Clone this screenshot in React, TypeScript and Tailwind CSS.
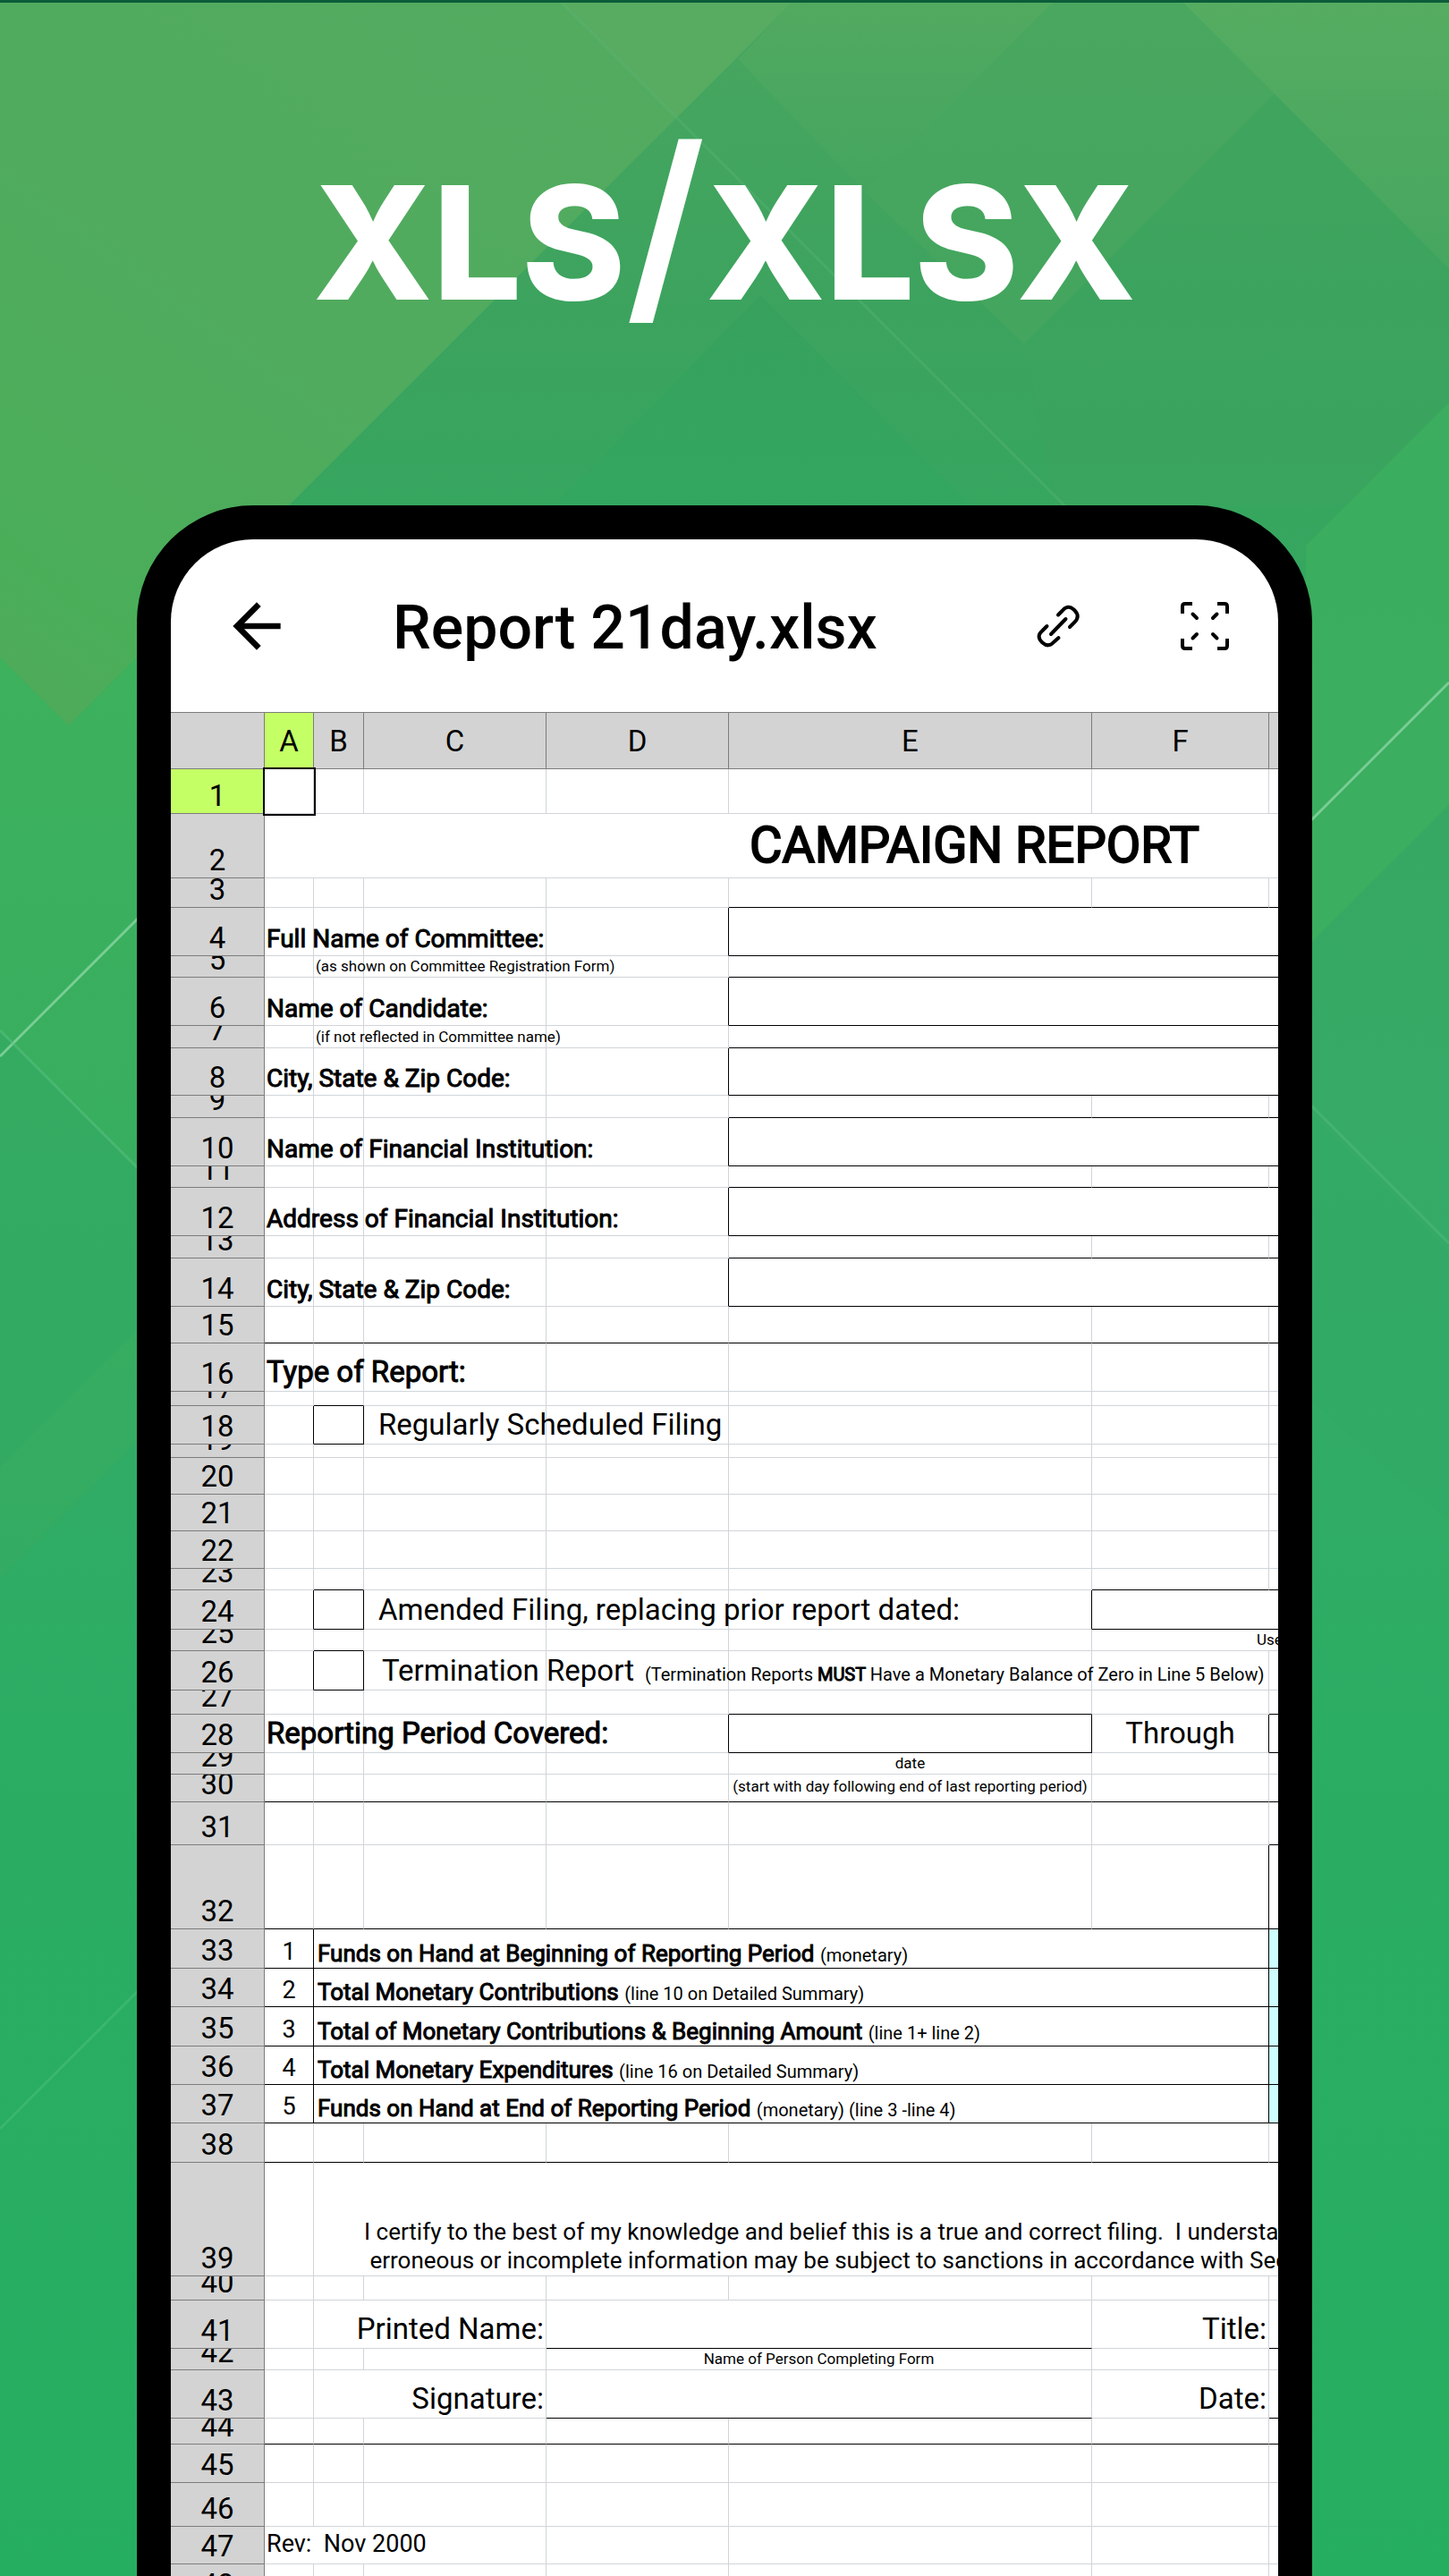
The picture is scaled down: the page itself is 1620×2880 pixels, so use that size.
import type { ReactNode } from 'react';
import clsx from 'clsx';

interface SheetCell {
    span?: number;
    content?: ReactNode;
    className?: string;
    // dark line on the right / bottom edge instead of the pale grid line
    right?: boolean;
    bottom?: boolean;
}

interface SheetRow {
    height: string;
    cells?: SheetCell[];
}

const COLUMNS = [
    { label: 'A', width: 'w-[55px]' },
    { label: 'B', width: 'w-[56px]' },
    { label: 'C', width: 'w-[204px]' },
    { label: 'D', width: 'w-[204px]' },
    { label: 'E', width: 'w-[406px]' },
    { label: 'F', width: 'w-[198px]' },
    { label: 'G', width: 'w-[465px]' },
];

const blank = (count: number, extra: SheetCell = {}): SheetCell[] =>
    Array.from({ length: count }, () => ({ ...extra }));

const strong = '[-webkit-text-stroke:1px]';
const label = clsx(strong, 'pb-1 pl-0.5 text-[28px]');
const heading = clsx(strong, 'pb-[5px] pl-0.5 text-[33px]');
const body = 'pb-[5px] text-[33px]';
const note = 'text-[17px]';

// label on the left, boxed value from E onwards
const fieldRow = (height: string, text: string): SheetRow => ({
    height,
    cells: [{ content: text, className: label }, ...blank(2), { right: true }, { span: 3, bottom: true }],
});

const hintRow = (height: string, text: string): SheetRow => ({
    height,
    cells: [{}, { content: text, className: clsx(note, 'pl-0.5') }, ...blank(2), { span: 3, bottom: true }],
});

const gapRow = (height: string): SheetRow => ({
    height,
    cells: [...blank(4), ...blank(3, { bottom: true })],
});

const summaryRow = (height: string, line: number, title: string, detail: string): SheetRow => ({
    height,
    cells: [
        { content: line, className: 'justify-center pb-1 text-[27px]', right: true, bottom: true },
        {
            span: 5,
            right: true,
            bottom: true,
            className: 'pl-1 text-[26px]',
            content: (
                <span>
                    <span className={strong}>{title}</span> <span className="text-[20px]">{detail}</span>
                </span>
            ),
        },
        { bottom: true, className: 'bg-[#ccffff]' },
    ],
});

const ROWS: SheetRow[] = [
    { height: 'h-[50px]', cells: [{ className: 'outline-2 outline-black' }, ...blank(6)] },
    {
        height: 'h-[72px]',
        cells: [{ span: 7, content: 'CAMPAIGN REPORT', className: 'justify-center pb-2 text-[56px] [-webkit-text-stroke:2px]' }],
    },
    gapRow('h-[33px]'),
    fieldRow('h-[54px]', 'Full Name of Committee:'),
    hintRow('h-[24px]', '(as shown on Committee Registration Form)'),
    fieldRow('h-[54px]', 'Name of Candidate:'),
    hintRow('h-[25px]', '(if not reflected in Committee name)'),
    fieldRow('h-[53px]', 'City, State & Zip Code:'),
    gapRow('h-[25px]'),
    fieldRow('h-[54px]', 'Name of Financial Institution:'),
    gapRow('h-[24px]'),
    fieldRow('h-[54px]', 'Address of Financial Institution:'),
    gapRow('h-[25px]'),
    fieldRow('h-[54px]', 'City, State & Zip Code:'),
    { height: 'h-[41px]', cells: blank(7, { bottom: true }) },
    { height: 'h-[54px]', cells: [{ content: 'Type of Report:', className: heading }, ...blank(6)] },
    { height: 'h-[16px]', cells: [{}, { bottom: true }, ...blank(5)] },
    {
        height: 'h-[43px]',
        cells: [
            { right: true },
            { right: true, bottom: true },
            { content: 'Regularly Scheduled Filing', className: clsx(body, 'pl-4') },
            ...blank(4),
        ],
    },
    { height: 'h-[15px]' },
    { height: 'h-[41px]' },
    { height: 'h-[41px]' },
    { height: 'h-[42px]' },
    { height: 'h-[24px]', cells: [{}, { bottom: true }, ...blank(3), ...blank(2, { bottom: true })] },
    {
        height: 'h-[44px]',
        cells: [
            { right: true },
            { right: true, bottom: true },
            { content: 'Amended Filing, replacing prior report dated:', className: clsx(body, 'pl-4') },
            {},
            { right: true },
            { span: 2, bottom: true },
        ],
    },
    {
        height: 'h-[24px]',
        cells: [{}, { bottom: true }, ...blank(3), { span: 2, content: 'Use', className: clsx(note, 'pl-46') }],
    },
    {
        height: 'h-[44px]',
        cells: [
            { right: true },
            { right: true, bottom: true },
            {
                className: 'pb-[5px] pl-5',
                content: (
                    <span className="flex items-baseline gap-3">
                        <span className="text-[33px]">Termination Report</span>
                        <span className="text-[20px]">
                            (Termination Reports <span className={strong}>MUST</span> Have a Monetary Balance of Zero in Line 5 Below)
                        </span>
                    </span>
                ),
            },
            ...blank(4),
        ],
    },
    { height: 'h-[27px]', cells: [...blank(4), { bottom: true }, {}, { bottom: true }] },
    {
        height: 'h-[43px]',
        cells: [
            { content: 'Reporting Period Covered:', className: heading },
            ...blank(2),
            { right: true },
            { right: true, bottom: true },
            { content: 'Through', className: clsx(body, 'justify-center'), right: true },
            { bottom: true },
        ],
    },
    { height: 'h-[24px]', cells: [...blank(4), { content: 'date', className: clsx(note, 'justify-center') }, ...blank(2)] },
    {
        height: 'h-[31px]',
        cells: [
            ...blank(4, { bottom: true }),
            {
                content: '(start with day following end of last reporting period)',
                className: clsx(note, 'justify-center pb-2'),
                bottom: true,
            },
            ...blank(2, { bottom: true }),
        ],
    },
    { height: 'h-[48px]', cells: [...blank(6), { bottom: true }] },
    { height: 'h-[94px]', cells: [...blank(5, { bottom: true }), { right: true, bottom: true }, { bottom: true }] },
    summaryRow('h-[44px]', 1, 'Funds on Hand at Beginning of Reporting Period', '(monetary)'),
    summaryRow('h-[43px]', 2, 'Total Monetary Contributions', '(line 10 on Detailed Summary)'),
    summaryRow('h-[44px]', 3, 'Total of Monetary Contributions & Beginning Amount', '(line 1+ line 2)'),
    summaryRow('h-[43px]', 4, 'Total Monetary Expenditures', '(line 16 on Detailed Summary)'),
    summaryRow('h-[43px]', 5, 'Funds on Hand at End of Reporting Period', '(monetary) (line 3 -line 4)'),
    { height: 'h-[44px]', cells: blank(7, { bottom: true }) },
    {
        height: 'h-[127px]',
        cells: [
            {},
            {
                span: 6,
                className: 'pb-px pl-14 text-[26px]',
                content: (
                    <p className="leading-8 whitespace-pre">
                        {'I certify to the best of my knowledge and belief this is a true and correct filing.  I understand\n'}
                        {' erroneous or incomplete information may be subject to sanctions in accordance with Section'}
                    </p>
                ),
            },
        ],
    },
    { height: 'h-[27px]' },
    {
        height: 'h-[54px]',
        cells: [
            {},
            { span: 2, content: 'Printed Name:', className: clsx(body, 'justify-end pr-0.5') },
            { span: 2, bottom: true },
            { content: 'Title:', className: clsx(body, 'justify-end pr-0.5') },
            { bottom: true },
        ],
    },
    {
        height: 'h-[24px]',
        cells: [
            ...blank(3),
            { span: 2, content: 'Name of Person Completing Form', className: clsx(note, 'justify-center') },
            ...blank(2),
        ],
    },
    {
        height: 'h-[54px]',
        cells: [
            {},
            { span: 2, content: 'Signature:', className: clsx(body, 'justify-end pr-0.5') },
            { span: 2, bottom: true },
            { content: 'Date:', className: clsx(body, 'justify-end pr-0.5') },
            { bottom: true },
        ],
    },
    { height: 'h-[29px]', cells: blank(7, { bottom: true }) },
    { height: 'h-[43px]' },
    { height: 'h-[49px]' },
    {
        height: 'h-[42px]',
        cells: [
            { span: 3, content: <span className="whitespace-pre">Rev:  Nov 2000</span>, className: 'pb-2 pl-0.5 text-[27px]' },
            ...blank(4),
        ],
    },
    { height: 'h-[43px]' },
];

const Backdrop = () => (
    <svg className="absolute inset-0 h-full w-full" viewBox="0 0 1620 2880" preserveAspectRatio="none" aria-hidden="true">
        <defs>
            <linearGradient id="base" x1="0" y1="0" x2="0" y2="1">
                <stop offset="0" stopColor="#48a660" />
                <stop offset="0.12" stopColor="#3ca35e" />
                <stop offset="0.2" stopColor="#36a65f" />
                <stop offset="0.45" stopColor="#36aa67" />
                <stop offset="0.7" stopColor="#2aad63" />
                <stop offset="1" stopColor="#26ae60" />
            </linearGradient>
            <linearGradient id="corner" x1="0.8" y1="0" x2="0" y2="1">
                <stop offset="0" stopColor="#53ab60" />
                <stop offset="0.5" stopColor="#50ab5e" />
                <stop offset="0.85" stopColor="#4aae59" />
                <stop offset="1" stopColor="#50a95a" />
            </linearGradient>
            <linearGradient id="side" x1="0" y1="0" x2="0" y2="1">
                <stop offset="0" stopColor="#3db15c" />
                <stop offset="1" stopColor="#33ab62" />
            </linearGradient>
            <linearGradient id="fade" x1="0" y1="0" x2="0" y2="1">
                <stop offset="0" stopColor="#5eb162" stopOpacity="0.6" />
                <stop offset="1" stopColor="#4fa95f" stopOpacity="0.5" />
            </linearGradient>
            <linearGradient id="shade" x1="0" y1="0" x2="0" y2="1">
                <stop offset="0" stopColor="#36a05c" stopOpacity="0.8" />
                <stop offset="1" stopColor="#30a75f" stopOpacity="0.6" />
            </linearGradient>
            <linearGradient id="band" x1="0" y1="0" x2="0" y2="1">
                <stop offset="0" stopColor="#55ab5f" stopOpacity="0.75" />
                <stop offset="1" stopColor="#4ba75f" stopOpacity="0.35" />
            </linearGradient>
        </defs>
        <rect width="1620" height="2880" fill="url(#base)" />
        <polygon points="888,0 1180,0 966,214 825,66" fill="url(#band)" />
        <polygon points="966,214 1180,0 1320,0 1425,105 1145,385" fill="#4ba85f" opacity="0.55" />
        <polygon points="850,330 1085,565 620,565" fill="url(#shade)" />
        <polygon points="1425,105 1620,300 1620,450 1510,565 1180,565 1145,385" fill="#3ba35d" opacity="0.5" />
        <polygon points="0,735 77,811 165,723 165,1600 0,1765" fill="url(#side)" />
        <polygon points="0,0 888,0 77,811 0,735" fill="url(#corner)" />
        <polygon points="625,0 888,0 757,131" fill="#60b063" opacity="0.35" />
        <polygon points="1320,0 1620,0 1620,300" fill="url(#fade)" />
        <polygon points="1620,450 1505,565 1460,610 1460,1060 1620,900" fill="#3db05e" opacity="0.7" />
        <polygon points="1460,1240 1620,1400 1620,1700 1460,1560" fill="#2fa966" opacity="0.5" />
        <polygon points="0,1152 160,1312 160,1480 0,1640" fill="#2fa763" opacity="0.5" />
        <g strokeWidth="3" fill="none">
            <path d="M625 0 1190 565" stroke="#5db877" opacity="0.35" />
            <path d="M0 1181 160 1021" stroke="#79cd95" />
            <path d="M0 1152 160 1312" stroke="#5cc182" opacity="0.5" />
            <path d="M1460 923 1620 763" stroke="#79cd95" />
            <path d="M1460 1230 1620 1390" stroke="#5cc182" opacity="0.4" />
            <path d="M0 2380 160 2220" stroke="#4cc07a" opacity="0.5" />
        </g>
        <rect width="1620" height="3" fill="#0b5c39" />
    </svg>
);

const BackIcon = () => (
    <svg className="size-20" viewBox="0 0 24 24" fill="currentColor" aria-hidden="true">
        <path d="M20 11H7.83l5.59-5.59L12 4l-8 8 8 8 1.41-1.41L7.83 13H20v-2z" />
    </svg>
);

const LinkIcon = () => (
    <svg className="size-12" viewBox="0 0 48 48" fill="none" stroke="currentColor" strokeWidth="4" strokeLinecap="round" strokeLinejoin="round" aria-hidden="true">
        <path d="M24 11.500L29 6.500Q35 -0.500 41.500 5.500L42.500 6.500Q49 13 42.500 19.500L37 25" />
        <path d="M11.500 24L6 29.500Q-0.500 35 5.500 41.500L6.500 42.500Q13 48.500 19 42L24.500 37" />
        <path d="M16 33 32.500 16" />
    </svg>
);

const FitScreenIcon = () => (
    <svg className="size-14" viewBox="0 0 56 56" fill="none" stroke="currentColor" strokeWidth="4" aria-hidden="true">
        <path d="M14 3H6Q3 3 3 6V14M42 3H50Q53 3 53 6V14M14 53H6Q3 53 3 50V42M42 53H50Q53 53 53 50V42" />
        <path strokeLinecap="round" d="M14.500 14.500 19 19M41.500 14.500 37 19M14.500 41.500 19 37M41.500 41.500 37 37" />
    </svg>
);

const AppBar = () => (
    <header className="flex h-[193px] items-center gap-[84px] pr-[42px] pl-14">
        <button type="button" aria-label="Back" className="flex size-20 shrink-0 items-center justify-center">
            <BackIcon />
        </button>
        <h2 className="ml-7 flex-1 pt-1 text-[68px] font-medium whitespace-nowrap">Report 21day.xlsx</h2>
        <button type="button" aria-label="Copy link" className="flex size-20 shrink-0 items-center justify-center">
            <LinkIcon />
        </button>
        <button type="button" aria-label="Fit to screen" className="flex size-20 shrink-0 items-center justify-center">
            <FitScreenIcon />
        </button>
    </header>
);

const Spreadsheet = () => (
    <table className="w-[1693px] table-fixed border-separate border-spacing-0 text-left leading-none">
        <thead>
            <tr>
                <th className="w-[105px] border-y border-r border-[#7c7c7c] bg-[#d3d3d3] p-0" />
                {COLUMNS.map((column, index) => (
                    <th
                        key={column.label}
                        scope="col"
                        className={clsx(
                            'h-16 border-y border-r border-[#7c7c7c] p-0 text-center text-[33px] font-normal',
                            column.width,
                            index === 0 ? 'bg-[#c5ff66]' : 'bg-[#d3d3d3]',
                        )}
                    >
                        {column.label}
                    </th>
                ))}
            </tr>
        </thead>
        <tbody>
            {ROWS.map((row, index) => (
                <tr key={index}>
                    <th scope="row" className="p-0 font-normal">
                        <div
                            className={clsx(
                                'flex items-end justify-center overflow-hidden border-r border-b border-[#7c7c7c] pb-[3px] text-[33px]',
                                row.height,
                                index === 0 ? 'bg-[#c5ff66]' : 'bg-[#d3d3d3]',
                            )}
                        >
                            {index + 1}
                        </div>
                    </th>
                    {(row.cells ?? blank(7)).map((cell, cellIndex) => (
                        <td key={cellIndex} colSpan={cell.span} className="p-0">
                            <div
                                className={clsx(
                                    'flex items-end border-r border-b whitespace-nowrap',
                                    row.height,
                                    cell.right ? 'border-r-black' : 'border-r-[#d0d5da]',
                                    cell.bottom ? 'border-b-black' : 'border-b-[#d0d5da]',
                                    !cell.className?.includes('pb-') && 'pb-[3px]',
                                    cell.className,
                                )}
                            >
                                {cell.content}
                            </div>
                        </td>
                    ))}
                </tr>
            ))}
        </tbody>
    </table>
);

export default function App() {
    return (
        <main className="relative flex h-screen flex-col overflow-hidden bg-[#2fab62] font-[Roboto,sans-serif] text-black">
            <Backdrop />
            <div className="relative flex h-[565px] shrink-0 items-center justify-center pb-6">
                <h1 className="font-[Inter,sans-serif] text-[176px] leading-none font-extrabold text-white">
                    XLS<span className="text-[236px] leading-[0] font-semibold">/</span>XLSX
                </h1>
            </div>
            <section className="relative mx-[153px] min-h-0 flex-1 overflow-hidden rounded-t-[130px] border-x-[38px] border-t-[38px] border-black bg-white">
                <AppBar />
                <Spreadsheet />
            </section>
        </main>
    );
}
